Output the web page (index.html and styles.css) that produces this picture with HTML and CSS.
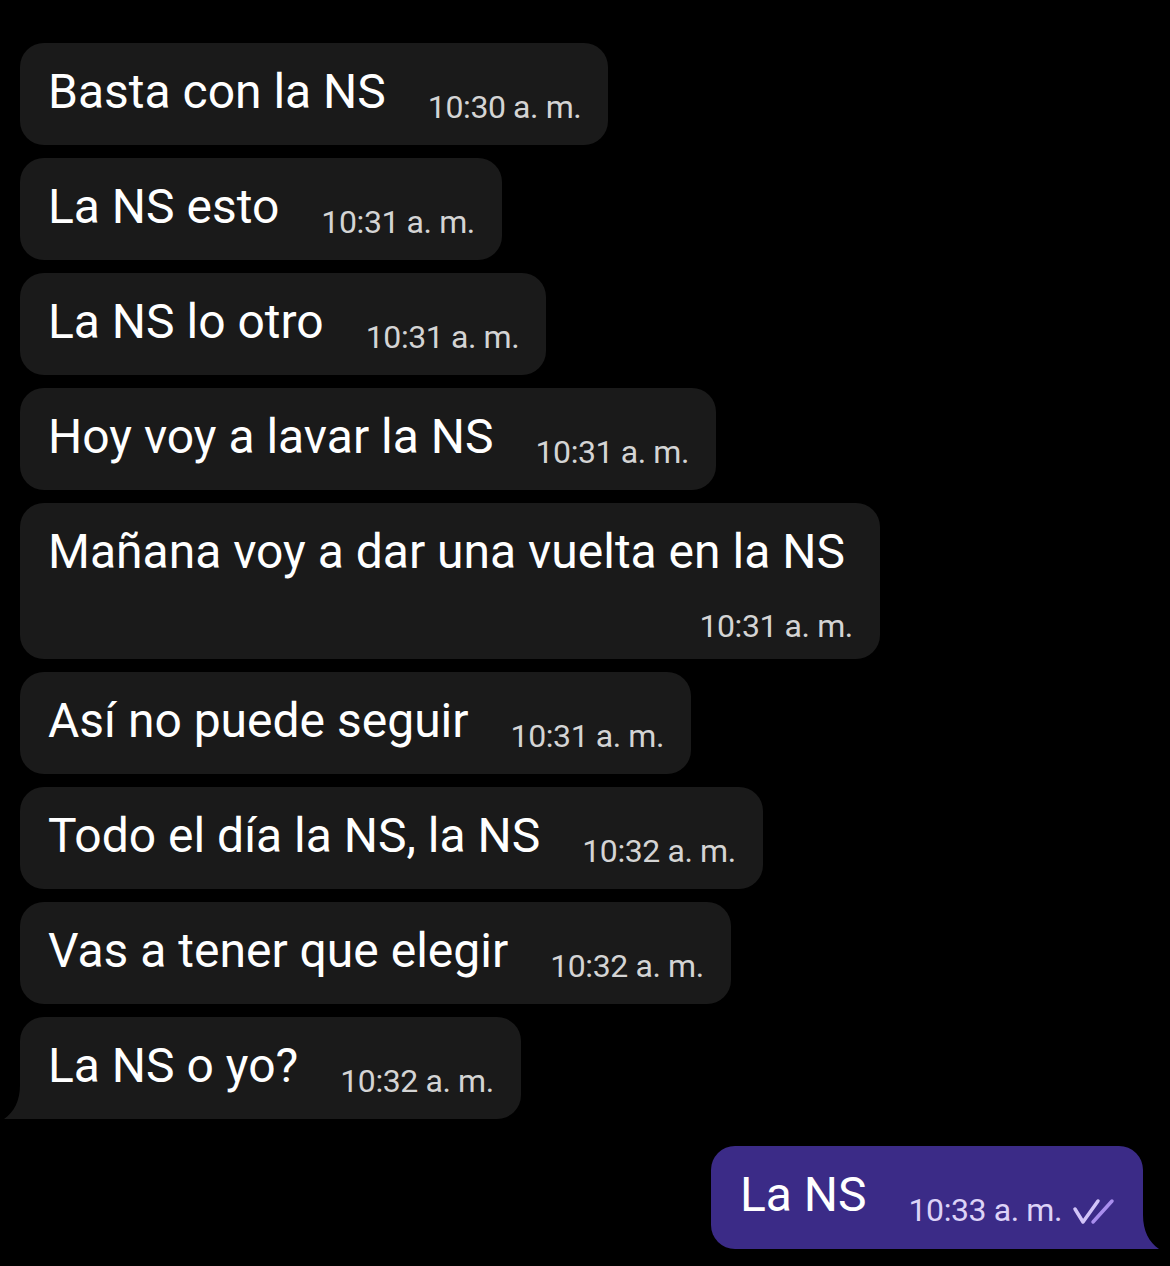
FILE: index.html
```html
<!DOCTYPE html>
<html lang="es">
<head>
    <meta charset="UTF-8">
    <meta name="viewport" content="width=device-width, initial-scale=1.0">
    <title>Chat</title>
    <link rel="stylesheet" href="styles.css">
</head>
<body>
    <div class="chat">
        <div class="bubble in">
            <span class="text">Basta con la NS</span>
            <span class="time">10:30 a. m.</span>
        </div>
        <div class="bubble in">
            <span class="text">La NS esto</span>
            <span class="time">10:31 a. m.</span>
        </div>
        <div class="bubble in">
            <span class="text">La NS lo otro</span>
            <span class="time">10:31 a. m.</span>
        </div>
        <div class="bubble in">
            <span class="text">Hoy voy a lavar la NS</span>
            <span class="time">10:31 a. m.</span>
        </div>
        <div class="bubble in wrap">
            <span class="text">Mañana voy a dar una vuelta en la NS</span>
            <span class="time">10:31 a. m.</span>
        </div>
        <div class="bubble in">
            <span class="text">Así no puede seguir</span>
            <span class="time">10:31 a. m.</span>
        </div>
        <div class="bubble in">
            <span class="text">Todo el día la NS, la NS</span>
            <span class="time">10:32 a. m.</span>
        </div>
        <div class="bubble in">
            <span class="text">Vas a tener que elegir</span>
            <span class="time">10:32 a. m.</span>
        </div>
        <div class="bubble in last">
            <span class="text">La NS o yo?</span>
            <span class="time">10:32 a. m.</span>
            <svg class="tail tail-left" width="30" height="34" viewBox="0 0 30 34">
                <path d="M16 0 C16 16 10 27 0 34 L30 34 L30 0 Z" fill="#1a1a1a"/>
            </svg>
        </div>

        <div class="bubble out">
            <span class="text">La NS</span>
            <span class="time">10:33 a. m.</span>
            <svg class="ticks" width="44" height="28" viewBox="0 0 44 28">
                <path d="M3 11 L11 24 L26 3" fill="none" stroke="#d2c4f8" stroke-width="3.5" stroke-linecap="round" stroke-linejoin="round"/>
                <path d="M21 24 L40 3" fill="none" stroke="#a98eee" stroke-width="3.5" stroke-linecap="round"/>
            </svg>
            <svg class="tail tail-right" width="30" height="34" viewBox="0 0 30 34">
                <path d="M14 0 C14 16 20 27 30 34 L0 34 L0 0 Z" fill="#3b2b87"/>
            </svg>
        </div>
    </div>
</body>
</html>
```

FILE: styles.css
```css
body {
    margin: 0;
    background-color: #000000;
    font-family: Roboto, "Liberation Sans", sans-serif;
    color: #ffffff;
}
.chat {
    display: flex;
    flex-direction: column;
    align-items: flex-start;
    gap: 13px;
    padding: 43px 27px 0 20px;
}
.bubble {
    position: relative;
    display: flex;
    align-items: flex-end;
    background-color: #1a1a1a;
    border-radius: 24px;
    padding: 21px 27px 25px 28px;
}
.text {
    font-size: 48px;
    line-height: 56px;
    white-space: nowrap;
}
.time {
    font-size: 32px;
    line-height: 25px;
    letter-spacing: -0.4px;
    color: #d4d4d4;
    margin-left: 42px;
    white-space: nowrap;
}
.bubble.wrap {
    flex-direction: column;
    align-items: flex-start;
    padding-bottom: 20px;
    padding-right: 35px;
}
.bubble.wrap .time {
    align-self: flex-end;
    margin-top: 34px;
    margin-right: -8px;
}
.bubble.last {
    border-bottom-left-radius: 0;
}
.bubble.out {
    align-self: flex-end;
    background-color: #3b2b87;
    margin-top: 14px;
    padding-left: 29px;
    padding-bottom: 26px;
    border-bottom-right-radius: 0;
}
.bubble.out .time {
    color: #ddd3f7;
}
.ticks {
    margin-left: 10px;
    margin-bottom: -3px;
}
.tail {
    position: absolute;
    bottom: 0;
}
.tail-left {
    left: -16px;
}
.tail-right {
    right: -16px;
}
```
